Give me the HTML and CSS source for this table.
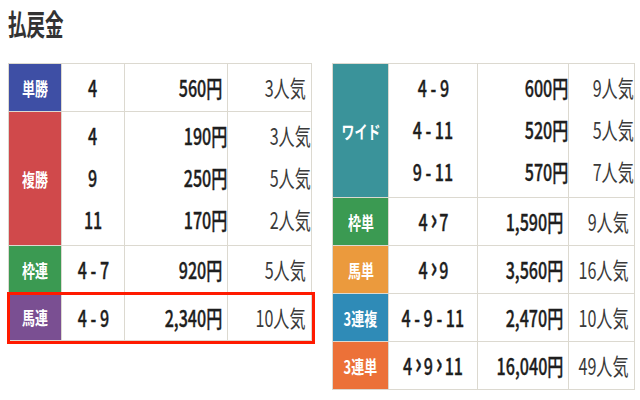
FILE: index.html
```html
<!DOCTYPE html>
<html lang="ja">
<head>
<meta charset="utf-8">
<title>払戻金</title>
<link rel="stylesheet" href="styles.css">
</head>
<body>
<div class="page">
  <h2 class="title"><span class="sx">払戻金</span></h2>
  <div class="tables">
    <div class="table left">
      <div class="row">
        <div class="cell label c-tan"><span class="sx">単勝</span></div>
        <div class="cell combo"><span class="sx">4</span></div>
        <div class="cell pay"><span class="sx">560円</span></div>
        <div class="cell pop"><span class="sx">3人気</span></div>
      </div>
      <div class="row multi">
        <div class="cell label c-fuku"><span class="sx">複勝</span></div>
        <div class="cell combo"><div class="line"><span class="sx">4</span></div><div class="line"><span class="sx">9</span></div><div class="line"><span class="sx">11</span></div></div>
        <div class="cell pay"><div class="line"><span class="sx">190円</span></div><div class="line"><span class="sx">250円</span></div><div class="line"><span class="sx">170円</span></div></div>
        <div class="cell pop"><div class="line"><span class="sx">3人気</span></div><div class="line"><span class="sx">5人気</span></div><div class="line"><span class="sx">2人気</span></div></div>
      </div>
      <div class="row">
        <div class="cell label c-green"><span class="sx">枠連</span></div>
        <div class="cell combo"><span class="sx">4 - 7</span></div>
        <div class="cell pay"><span class="sx">920円</span></div>
        <div class="cell pop"><span class="sx">5人気</span></div>
      </div>
      <div class="row last hl">
        <div class="cell label c-umaren"><span class="sx">馬連</span></div>
        <div class="cell combo"><span class="sx">4 - 9</span></div>
        <div class="cell pay"><span class="sx">2,340円</span></div>
        <div class="cell pop"><span class="sx">10人気</span></div>
      </div>
    </div>
    <div class="table right">
      <div class="row multi">
        <div class="cell label c-wide"><span class="sx">ワイド</span></div>
        <div class="cell combo"><div class="line"><span class="sx">4 - 9</span></div><div class="line"><span class="sx">4 - 11</span></div><div class="line"><span class="sx">9 - 11</span></div></div>
        <div class="cell pay"><div class="line"><span class="sx">600円</span></div><div class="line"><span class="sx">520円</span></div><div class="line"><span class="sx">570円</span></div></div>
        <div class="cell pop"><div class="line"><span class="sx">9人気</span></div><div class="line"><span class="sx">5人気</span></div><div class="line"><span class="sx">7人気</span></div></div>
      </div>
      <div class="row">
        <div class="cell label c-green"><span class="sx">枠単</span></div>
        <div class="cell combo"><span class="sx">4<i class="gt">›</i>7</span></div>
        <div class="cell pay"><span class="sx">1,590円</span></div>
        <div class="cell pop"><span class="sx">9人気</span></div>
      </div>
      <div class="row">
        <div class="cell label c-umatan"><span class="sx">馬単</span></div>
        <div class="cell combo"><span class="sx">4<i class="gt">›</i>9</span></div>
        <div class="cell pay"><span class="sx">3,560円</span></div>
        <div class="cell pop"><span class="sx">16人気</span></div>
      </div>
      <div class="row">
        <div class="cell label c-trio"><span class="sx">3連複</span></div>
        <div class="cell combo"><span class="sx">4 - 9 - 11</span></div>
        <div class="cell pay"><span class="sx">2,470円</span></div>
        <div class="cell pop"><span class="sx">10人気</span></div>
      </div>
      <div class="row">
        <div class="cell label c-tierce"><span class="sx">3連単</span></div>
        <div class="cell combo"><span class="sx">4<i class="gt">›</i>9<i class="gt">›</i>11</span></div>
        <div class="cell pay"><span class="sx">16,040円</span></div>
        <div class="cell pop"><span class="sx">49人気</span></div>
      </div>
    </div>
  </div>
</div>
</body>
</html>
```
FILE: styles.css
```css
* { box-sizing: border-box; }
html, body { margin: 0; padding: 0; background: #fff; }
body {
  font-family: "Noto Sans CJK JP", "Noto Sans", sans-serif;
  color: #222;
  width: 640px;
  height: 400px;
  overflow: hidden;
}
.page { padding: 6px 0 0 8px; }
.title {
  margin: 0;
  height: 57px;
  font-size: 29px;
  line-height: 34px;
  font-weight: 700;
  color: #333;
}
.title .sx { transform: scaleX(0.64); transform-origin: left center; }
.sx { display: inline-block; transform: scaleX(0.7); white-space: pre; }
.tables { display: flex; align-items: flex-start; gap: 20px; }
.table { border-top: 1px solid #dcd9d0; border-left: 1px solid #dcd9d0; position: relative; }
.left { --cols: 53px 63px 103px 84px; }
.right { --cols: 56px 89px 91px 66px; }
.row {
  display: grid;
  grid-template-columns: var(--cols);
  height: 48px;
  position: relative;
}
.row.multi { height: 134px; }
.row.last { height: 47px; }
.cell {
  border-right: 1px solid #dcd9d0;
  border-bottom: 1px solid #dcd9d0;
  display: flex;
  align-items: center;
  font-size: 23px;
  line-height: 1;
}
.multi .cell:not(.label) { flex-direction: column; align-items: stretch; padding: 2px 0 4px; }
.line { flex: 1; display: flex; align-items: center; }
.label {
  justify-content: center;
  color: #fff;
  font-size: 18px;
  font-weight: 700;
}
.label .sx { transform: scaleX(0.72); }
.combo, .combo .line { justify-content: center; font-weight: 500; color: #1e1e1e; -webkit-text-stroke: 0.35px #1e1e1e; }
.pay, .pay .line { justify-content: flex-end; padding-right: 5px; font-weight: 500; color: #1e1e1e; -webkit-text-stroke: 0.35px #1e1e1e; }
.multi .pay { padding-right: 5px; }
.pay .line { padding-right: 0; }
.pay .sx { transform-origin: right center; }
.pop, .pop .line { justify-content: flex-end; padding-right: 5px; color: #3a3a3a; font-weight: 400; }
.multi .pop { padding-right: 5px; }
.pop .line { padding-right: 0; }
.pop .sx { transform-origin: right center; }
.gt { font-style: normal; font-weight: 700; font-size: 30px; line-height: 0; margin: 0 3px 0 4px; position: relative; top: -1px; }
.c-tan { background: #3e4fa5; }
.c-fuku { background: #d0494b; }
.c-green { background: #3b9a52; }
.c-umaren { background: #7a4f92; }
.c-wide { background: #3a939a; }
.c-umatan { background: #eb9a3d; }
.c-trio { background: #2f8bb7; }
.c-tierce { background: #ec7138; }
.hl::after {
  content: "";
  position: absolute;
  left: -2px;
  top: -2px;
  right: -3px;
  bottom: -3px;
  border: 3px solid #ff1a00;
  pointer-events: none;
}
```
